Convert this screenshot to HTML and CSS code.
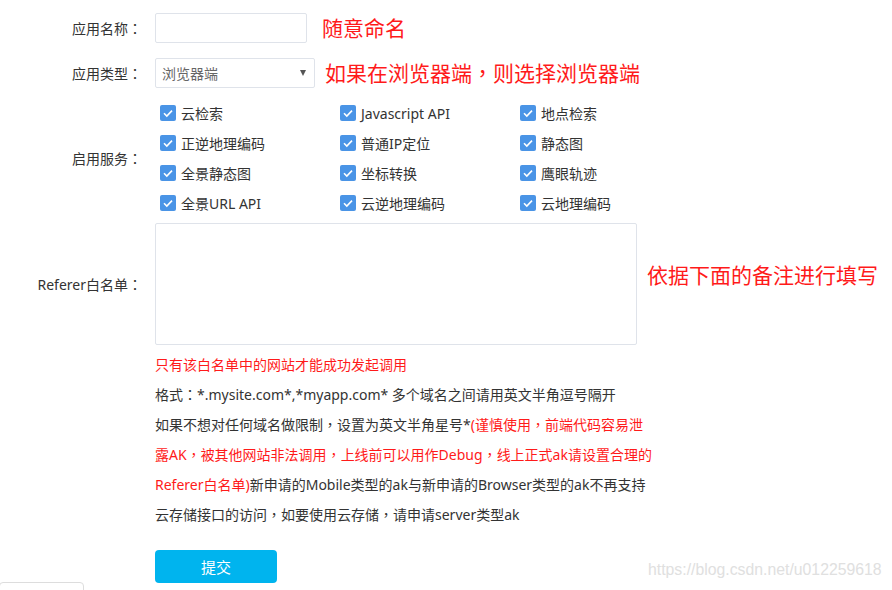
FILE: index.html
```html
<!DOCTYPE html>
<html>
    <head>
        <meta charset="utf-8">
        <title>创建应用</title>
        <link rel="stylesheet" href="styles.css">
    </head>
    <body>

    <div id="caja">
        <form name="app" class="formulario">

            <div class="fila fila-nombre">
                <span class="etiqueta">应用名称<span class="dos">：</span></span>
                <input type="text" name="nombre" class="campo">
                <span class="nota-roja nota-nombre">随意命名</span>
            </div>

            <div class="fila fila-tipo">
                <span class="etiqueta">应用类型<span class="dos">：</span></span>
                <div class="selector">
                    <span>浏览器端</span>
                    <span class="flecha"></span>
                </div>
                <span class="nota-roja nota-tipo">如果在浏览器端<span class="dos">，</span>则选择浏览器端</span>
            </div>

            <div class="fila fila-servicios">
                <span class="etiqueta">启用服务<span class="dos">：</span></span>
                <div class="servicios">
                    <label class="opcion"><span class="marca"><svg viewBox="0 0 16 16" width="16" height="16"><path d="M4 8.2 L6.8 11 L12 5.6" fill="none" stroke="#fff" stroke-width="1.6"/></svg></span>云检索</label>
                    <label class="opcion"><span class="marca"><svg viewBox="0 0 16 16" width="16" height="16"><path d="M4 8.2 L6.8 11 L12 5.6" fill="none" stroke="#fff" stroke-width="1.6"/></svg></span>Javascript API</label>
                    <label class="opcion"><span class="marca"><svg viewBox="0 0 16 16" width="16" height="16"><path d="M4 8.2 L6.8 11 L12 5.6" fill="none" stroke="#fff" stroke-width="1.6"/></svg></span>地点检索</label>
                    <label class="opcion"><span class="marca"><svg viewBox="0 0 16 16" width="16" height="16"><path d="M4 8.2 L6.8 11 L12 5.6" fill="none" stroke="#fff" stroke-width="1.6"/></svg></span>正逆地理编码</label>
                    <label class="opcion"><span class="marca"><svg viewBox="0 0 16 16" width="16" height="16"><path d="M4 8.2 L6.8 11 L12 5.6" fill="none" stroke="#fff" stroke-width="1.6"/></svg></span>普通IP定位</label>
                    <label class="opcion"><span class="marca"><svg viewBox="0 0 16 16" width="16" height="16"><path d="M4 8.2 L6.8 11 L12 5.6" fill="none" stroke="#fff" stroke-width="1.6"/></svg></span>静态图</label>
                    <label class="opcion"><span class="marca"><svg viewBox="0 0 16 16" width="16" height="16"><path d="M4 8.2 L6.8 11 L12 5.6" fill="none" stroke="#fff" stroke-width="1.6"/></svg></span>全景静态图</label>
                    <label class="opcion"><span class="marca"><svg viewBox="0 0 16 16" width="16" height="16"><path d="M4 8.2 L6.8 11 L12 5.6" fill="none" stroke="#fff" stroke-width="1.6"/></svg></span>坐标转换</label>
                    <label class="opcion"><span class="marca"><svg viewBox="0 0 16 16" width="16" height="16"><path d="M4 8.2 L6.8 11 L12 5.6" fill="none" stroke="#fff" stroke-width="1.6"/></svg></span>鹰眼轨迹</label>
                    <label class="opcion"><span class="marca"><svg viewBox="0 0 16 16" width="16" height="16"><path d="M4 8.2 L6.8 11 L12 5.6" fill="none" stroke="#fff" stroke-width="1.6"/></svg></span>全景URL API</label>
                    <label class="opcion"><span class="marca"><svg viewBox="0 0 16 16" width="16" height="16"><path d="M4 8.2 L6.8 11 L12 5.6" fill="none" stroke="#fff" stroke-width="1.6"/></svg></span>云逆地理编码</label>
                    <label class="opcion"><span class="marca"><svg viewBox="0 0 16 16" width="16" height="16"><path d="M4 8.2 L6.8 11 L12 5.6" fill="none" stroke="#fff" stroke-width="1.6"/></svg></span>云地理编码</label>
                </div>
            </div>

            <div class="fila fila-referer">
                <span class="etiqueta">Referer白名单<span class="dos">：</span></span>
                <textarea name="referer" class="area"></textarea>
                <span class="nota-roja nota-referer">依据下面的备注进行填写</span>
            </div>

            <div class="notas">
                <p class="rojo">只有该白名单中的网站才能成功发起调用</p>
                <p>格式<span class="dos">：</span>*.mysite.com*,*myapp.com* 多个域名之间请用英文半角逗号隔开</p>
                <p>如果不想对任何域名做限制<span class="dos">，</span>设置为英文半角星号*<span class="rojo">(谨慎使用<span class="dos">，</span>前端代码容易泄<br>露AK<span class="dos">，</span>被其他网站非法调用<span class="dos">，</span>上线前可以用作Debug<span class="dos">，</span>线上正式ak请设置合理的<br>Referer白名单)</span>新申请的Mobile类型的ak与新申请的Browser类型的ak不再支持<br>云存储接口的访问<span class="dos">，</span>如要使用云存储<span class="dos">，</span>请申请server类型ak</p>
            </div>

            <input type="button" value="提交" class="boton">
        </form>

        <div class="caja-abajo"></div>
        <span class="marca-agua">https://blog.csdn.net/u012259618</span>
    </div>

    </body>
</html>
```

FILE: styles.css
```css
body {
    margin: 0;
    font-family: "Noto Sans", "Noto Sans CJK SC", sans-serif;
    font-size: 14px;
    color: #333;
    background: #fff;
}

#caja {
    position: relative;
    width: 892px;
    height: 590px;
    overflow: hidden;
}

/* puntuacion de ancho completo centrada */
.dos {
    font-family: "Noto Sans CJK TC", sans-serif;
    line-height: 1;
}

.formulario {
    padding-top: 13px;
}

.fila {
    display: flex;
    align-items: center;
}

.etiqueta {
    width: 142px;
    margin-right: 13px;
    text-align: right;
    flex-shrink: 0;
    color: #333;
}

.campo {
    box-sizing: border-box;
    width: 152px;
    height: 30px;
    border: 1px solid #dfe3ea;
    border-radius: 2px;
    margin: 0;
    padding: 0 8px;
}

.nota-roja {
    color: #ff1a1a;
    font-size: 21px;
    line-height: 30px;
}
.nota-nombre { margin-left: 15px; }
.nota-tipo { margin-left: 10px; }
.nota-referer { margin-left: 10px; margin-bottom: 18px; }

.fila-tipo { margin-top: 15px; }

.selector {
    box-sizing: border-box;
    width: 160px;
    height: 30px;
    border: 1px solid #dfe3ea;
    border-radius: 2px;
    padding: 0 6px;
    display: flex;
    align-items: center;
    justify-content: space-between;
    color: #666;
}
.flecha {
    width: 0;
    height: 0;
    border-left: 3.5px solid transparent;
    border-right: 3.5px solid transparent;
    border-top: 6px solid #555;
    margin-right: 2px;
}

.fila-servicios { margin-top: 10px; }

.servicios {
    display: grid;
    grid-template-columns: repeat(3, 180px);
}
.opcion {
    height: 30px;
    display: flex;
    align-items: center;
}
.marca {
    width: 16px;
    height: 16px;
    margin-left: 5px;
    margin-right: 5px;
    background: #4a94e6;
    border-radius: 2px;
    display: flex;
}

.fila-referer { margin-top: 5px; }

.area {
    box-sizing: border-box;
    width: 482px;
    height: 122px;
    margin: 0;
    border: 1px solid #dfe3ea;
    border-radius: 2px;
    resize: none;
}

.notas {
    margin-left: 155px;
    margin-top: 5px;
    line-height: 30px;
    font-size: 14px;
    white-space: nowrap;
}
.notas p { margin: 0; height: auto; }
.rojo { color: #ff1a1a; }

.boton {
    margin: 20px 0 0 155px;
    width: 122px;
    height: 33px;
    border: none;
    border-radius: 4px;
    background: #00b4ee;
    color: #fff;
    font-family: "Noto Sans CJK SC", sans-serif;
    font-size: 15px;
}

.caja-abajo {
    position: absolute;
    left: -1px;
    top: 582px;
    width: 83px;
    height: 20px;
    border: 1px solid #ddd;
    border-radius: 4px;
}

.marca-agua {
    position: absolute;
    left: 648px;
    top: 561px;
    font-family: "Liberation Sans", Arial, sans-serif;
    font-size: 15.8px;
    color: #e0e0e0;
}
```
